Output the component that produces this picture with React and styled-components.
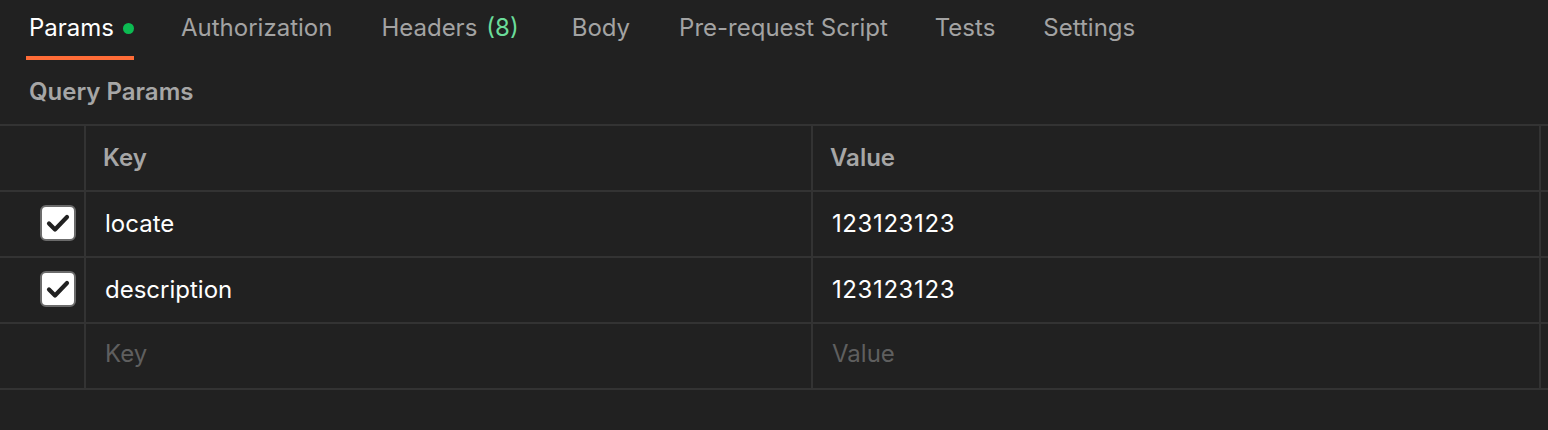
import React from "react";
import styled, { createGlobalStyle } from "styled-components";

const GlobalStyle = createGlobalStyle`
  html, body {
    margin: 0;
    padding: 0;
    background: #212121;
  }
  body {
    font-family: Inter, "Noto Sans", sans-serif;
    -webkit-font-smoothing: antialiased;
  }
`;

const Page = styled.div`
  width: 1548px;
  height: 430px;
  background: #212121;
  overflow: hidden;
`;

const TabBar = styled.div`
  display: flex;
  align-items: flex-start;
  padding: 0 0 0 26px;
  height: 60px;
`;

const Tab = styled.div`
  display: flex;
  align-items: center;
  height: 56px;
  padding: 0 ${(p) => (p.dot ? 0 : 3)}px 0 3px;
  margin-right: ${(p) => p.gap}px;
  font-size: 24px;
  color: ${(p) => (p.active ? "#ffffff" : "#a3a3a3")};
  border-bottom: 4px solid ${(p) => (p.active ? "#ff6c37" : "transparent")};
  line-height: 1;
  white-space: nowrap;
`;

const Dot = styled.span`
  width: 11px;
  height: 11px;
  border-radius: 50%;
  background: #0cbb52;
  margin-left: 9px;
  margin-top: 1px;
`;

const Count = styled.span`
  color: #6bdd9a;
  margin-left: 9px;
`;

const SectionTitle = styled.div`
  padding: 20px 0 0 29px;
  height: 44px;
  font-size: 24px;
  font-weight: 600;
  color: #a6a6a6;
  line-height: 1;
`;

const Table = styled.div`
  border-top: 2px solid #333333;
`;

const Row = styled.div`
  display: grid;
  grid-template-columns: 84px 2px 725px 2px 726px 2px 7px;
  height: 64px;
  border-bottom: 2px solid #333333;
`;

const Divider = styled.div`
  background: #333333;
`;

const CheckCell = styled.div`
  display: flex;
  align-items: center;
  justify-content: flex-end;
  padding-right: 8px;
`;

const Cell = styled.div`
  display: flex;
  align-items: center;
  padding-left: ${(p) => p.pad || 19}px;
  padding-bottom: ${(p) => (p.placeholder ? 5 : 2)}px;
  font-size: 24px;
  letter-spacing: ${(p) => (p.digits ? "0.6px" : "normal")};
  font-weight: ${(p) => (p.head ? 600 : 400)};
  color: ${(p) => (p.head ? "#a6a6a6" : p.placeholder ? "#5f5f5f" : "#ffffff")};
`;

const Box = styled.div`
  width: 32px;
  height: 32px;
  border-radius: 6px;
  background: #ffffff;
  border: 2px solid #6b6b6b;
  display: flex;
  align-items: center;
  justify-content: center;
  margin-left: -1px;
  margin-top: -2px;
`;

const Check = () => (
  <svg width="32" height="32" viewBox="0 0 32 32">
    <path
      d="M7 16.5 L13 22.5 L25 10"
      fill="none"
      stroke="#212121"
      strokeWidth="4.2"
      strokeLinecap="round"
      strokeLinejoin="round"
    />
  </svg>
);

const tabs = [
  { label: "Params", active: true, dot: true, gap: 44 },
  { label: "Authorization", gap: 43 },
  { label: "Headers", count: "(8)", gap: 47 },
  { label: "Body", gap: 43 },
  { label: "Pre-request Script", gap: 41 },
  { label: "Tests", gap: 42 },
  { label: "Settings", gap: 43 },
];

const params = [
  { key: "locate", value: "123123123" },
  { key: "description", value: "123123123" },
];

export default function App() {
  return (
    <Page>
      <GlobalStyle />
      <TabBar>
        {tabs.map((t) => (
          <Tab key={t.label} active={t.active} dot={t.dot} gap={t.gap}>
            {t.label}
            {t.dot && <Dot />}
            {t.count && <Count>{t.count}</Count>}
          </Tab>
        ))}
      </TabBar>
      <SectionTitle>Query Params</SectionTitle>
      <Table>
        <Row>
          <CheckCell />
          <Divider />
          <Cell head pad={17}>Key</Cell>
          <Divider />
          <Cell head pad={17}>Value</Cell>
          <Divider />
          <div />
        </Row>
        {params.map((p) => (
          <Row key={p.key}>
            <CheckCell>
              <Box>
                <Check />
              </Box>
            </CheckCell>
            <Divider />
            <Cell>{p.key}</Cell>
            <Divider />
            <Cell digits>{p.value}</Cell>
            <Divider />
            <div />
          </Row>
        ))}
        <Row>
          <CheckCell />
          <Divider />
          <Cell placeholder>Key</Cell>
          <Divider />
          <Cell placeholder>Value</Cell>
          <Divider />
          <div />
        </Row>
      </Table>
    </Page>
  );
}
